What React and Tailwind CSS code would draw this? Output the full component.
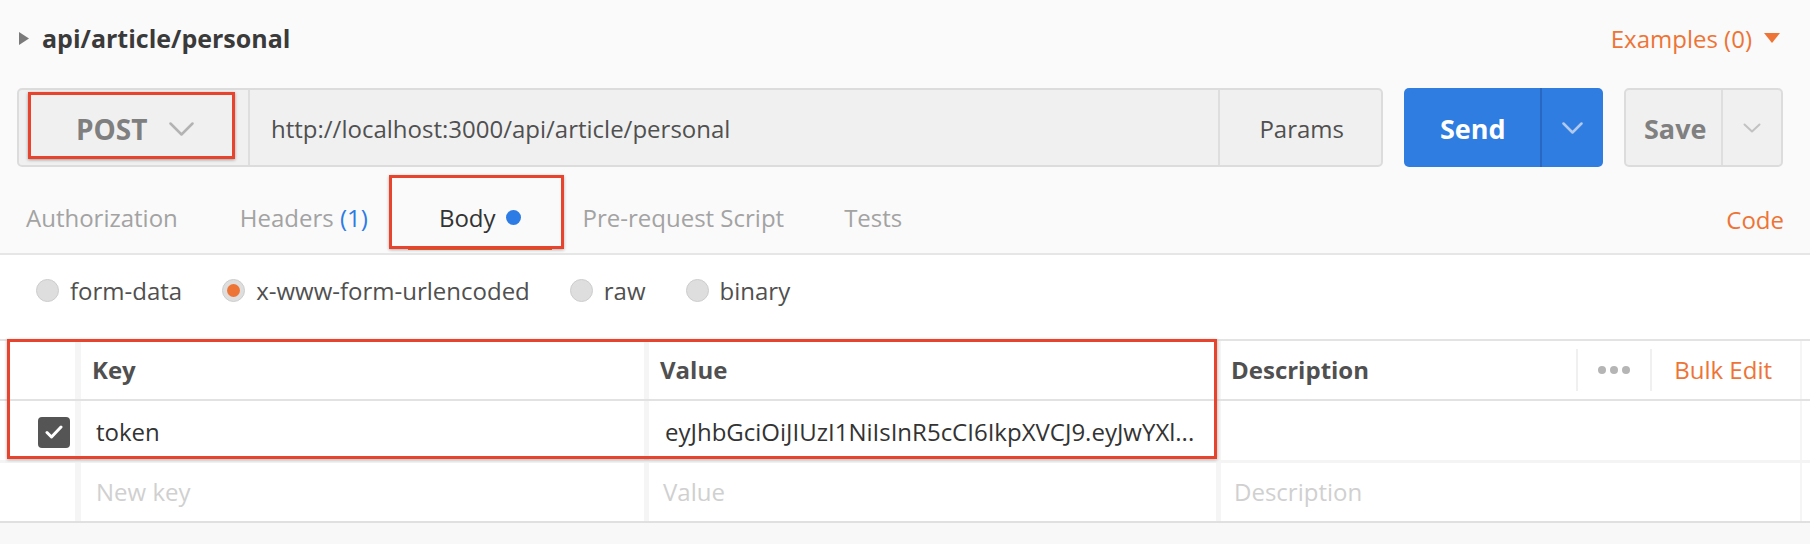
import React from "react";

function Chevron({ w, h, color, sw = 2.5 }) {
  return (
    <svg width={w} height={h} viewBox={`0 0 ${w} ${h}`} fill="none">
      <polyline
        points={`1.5,1.5 ${w / 2},${h - 1.5} ${w - 1.5},1.5`}
        stroke={color}
        strokeWidth={sw}
        strokeLinecap="round"
        strokeLinejoin="round"
      />
    </svg>
  );
}

function Radio({ label, checked }) {
  return (
    <div className="flex items-center gap-[11px]">
      <div className="w-[23px] h-[23px] rounded-full bg-[#dedede] border border-[#cdcdcd] flex items-center justify-center">
        {checked && <div className="w-[13px] h-[13px] rounded-full bg-[#ee7436]" />}
      </div>
      <span className="text-[24px] leading-[33px] text-[#505050]">{label}</span>
    </div>
  );
}

function Tab({ children, active, className = "" }) {
  return (
    <div
      className={
        "relative px-[31px] pb-[13px] border-b-[3px] leading-[33px] text-[24px] " +
        (active ? "border-[#ee7436] text-[#333333] " : "border-transparent text-[#a3a3a3] ") +
        className
      }
    >
      {children}
    </div>
  );
}

export default function App() {
  return (
    <div className="w-[1810px] h-[544px] bg-[#fafafa] overflow-hidden font-['Open_Sans',sans-serif] flex flex-col">
      {/* title row */}
      <div className="mt-[20px] h-[36px] flex items-center justify-between pl-[19px] pr-[30px]">
        <div className="flex items-center gap-[13px]">
          <svg width="10" height="13" viewBox="0 0 10 13">
            <polygon points="0,0 10,6.5 0,13" fill="#7a7a7a" />
          </svg>
          <span className="text-[25px] font-bold text-[#3a3a3a] leading-[36px]">api/article/personal</span>
        </div>
        <div className="flex items-center gap-[12px] text-[#ee7436]">
          <span className="text-[24px] leading-[33px]">Examples (0)</span>
          <svg width="16" height="10" viewBox="0 0 16 10">
            <polygon points="0,0 16,0 8,10" fill="#ee7436" />
          </svg>
        </div>
      </div>

      {/* url row */}
      <div className="mt-[32px] h-[79px] flex pl-[17px] gap-[21px]">
        <div className="w-[1366px] flex border-2 border-[#dcdcdc] rounded-[5px] bg-[#f0f0f0]">
          <div className="relative w-[231px] border-r-2 border-[#dedede] flex items-center pl-[57px]">
            <span className="text-[28px] font-bold text-[#7f7f7f] mt-[3px]">POST</span>
            <span className="ml-[21px] mt-[2px]">
              <Chevron w={25} h={14} color="#b3b3b3" />
            </span>
            <div className="absolute left-[9px] right-[13px] top-[2px] bottom-[6px] border-[3px] border-[#e8432d] shadow-[0_1px_3px_rgba(0,0,0,0.35)]" />
          </div>
          <div className="flex-1 flex items-center pl-[21px] pt-[2px] text-[24px] text-[#505050]">
            http://localhost:3000/api/article/personal
          </div>
          <div className="border-l-2 border-[#dedede] flex items-center pl-[39px] pr-[37px] pt-[2px] text-[24px] text-[#505050]">
            Params
          </div>
        </div>
        <div className="w-[199px] flex rounded-[5px] bg-[#2f7de1]">
          <div className="w-[138px] border-r-2 border-[#2867c2] flex items-center pl-[36px]">
            <span className="text-[27px] font-bold text-white mt-[3px]">Send</span>
          </div>
          <div className="flex-1 flex items-center justify-center">
            <Chevron w={21} h={12} color="#b1c9ec" />
          </div>
        </div>
        <div className="w-[159px] flex border-2 border-[#dcdcdc] rounded-[5px] bg-[#f0f0f0]">
          <div className="w-[97px] border-r-2 border-[#dedede] flex items-center pl-[18px]">
            <span className="text-[27px] font-bold text-[#808080] mt-[3px]">Save</span>
          </div>
          <div className="flex-1 flex items-center justify-center">
            <Chevron w={18} h={10} color="#c2c2c2" sw={2} />
          </div>
        </div>
      </div>

      {/* tabs */}
      <div className="h-[88px] border-b-2 border-[#e6e6e6] flex items-end justify-between pb-[3px]">
        <div className="flex items-end ml-[-5px]">
          <Tab>Authorization</Tab>
          <Tab>
            Headers <span className="text-[#2d7be5]">(1)</span>
          </Tab>
          <Tab active className="ml-[9px] flex items-center">
            <span>Body</span>
            <span className="ml-[10px] w-[15px] h-[15px] rounded-full bg-[#2d7be5]" />
            <div className="absolute -left-[19px] -right-[12px] -top-[26px] -bottom-[2px] border-[3px] border-[#e8432d] shadow-[0_1px_3px_rgba(0,0,0,0.3)]" />
          </Tab>
          <Tab>Pre-request Script</Tab>
          <Tab className="-ml-[2px]">Tests</Tab>
        </div>
        <div className="pr-[26px] mb-[14px] text-[24px] leading-[33px] text-[#ee7436]">Code</div>
      </div>

      {/* body type radios */}
      <div className="h-[84px] bg-white flex items-start pt-[19px] pl-[36px] gap-[40px]">
        <Radio label="form-data" />
        <Radio label="x-www-form-urlencoded" checked />
        <Radio label="raw" />
        <Radio label="binary" />
      </div>

      {/* key/value table */}
      <div className="relative bg-white border-t-2 border-[#e3e3e3]">
        <div className="flex h-[60px] border-b-2 border-[#e2e2e2] text-[24px] font-bold text-[#505050]">
          <div className="w-[75px]" />
          <div className="w-[569px] border-l-[6px] border-[#f5f5f5] flex items-center pl-[11px]">Key</div>
          <div className="w-[572px] border-l-[5px] border-[#f5f5f5] flex items-center pl-[11px]">Value</div>
          <div className="w-[586px] border-l-[5px] border-r-2 border-[#f5f5f5] flex items-center pl-[10px]">
            <span className="flex-1">Description</span>
            <div className="w-[2px] h-[42px] bg-[#f0f0f0]" />
            <div className="flex gap-[4px] px-[20px]">
              <span className="w-[8px] h-[8px] rounded-full bg-[#b5b5b5]" />
              <span className="w-[8px] h-[8px] rounded-full bg-[#b5b5b5]" />
              <span className="w-[8px] h-[8px] rounded-full bg-[#b5b5b5]" />
            </div>
            <div className="w-[2px] h-[42px] bg-[#f0f0f0]" />
            <span className="pl-[22px] pr-[28px] font-normal text-[#ee7436]">Bulk Edit</span>
          </div>
        </div>

        <div className="flex h-[62px] border-b-[3px] border-[#f4f4f4] text-[24px] text-[#333333]">
          <div className="w-[75px] flex items-center pl-[38px] pt-[3px]">
            <div className="w-[32px] h-[31px] rounded-[4px] bg-[#555555] flex items-center justify-center">
              <svg width="18" height="14" viewBox="0 0 18 14" fill="none">
                <polyline points="2,7.5 6.5,12 16,2" stroke="white" strokeWidth="3" strokeLinecap="round" strokeLinejoin="round" />
              </svg>
            </div>
          </div>
          <div className="w-[569px] border-l-[6px] border-[#f5f5f5] flex items-center pl-[15px] pt-[3px]">token</div>
          <div className="w-[572px] border-l-[5px] border-[#f5f5f5] flex items-center pl-[16px] pt-[3px] whitespace-nowrap overflow-hidden">
            eyJhbGciOiJIUzI1NiIsInR5cCI6IkpXVCJ9.eyJwYXl...
          </div>
          <div className="w-[586px] border-l-[5px] border-r-2 border-[#f5f5f5]" />
        </div>

        <div className="flex h-[60px] border-b-2 border-[#e0e0e0] text-[24px] text-[#d0d0d0]">
          <div className="w-[75px]" />
          <div className="w-[569px] border-l-[6px] border-[#f5f5f5] flex items-center pl-[15px]">New key</div>
          <div className="w-[572px] border-l-[5px] border-[#f5f5f5] flex items-center pl-[14px]">Value</div>
          <div className="w-[586px] border-l-[5px] border-r-2 border-[#f5f5f5] flex items-center pl-[13px]">Description</div>
        </div>

        <div className="absolute left-[7px] top-[-2px] w-[1210px] h-[120px] border-[3px] border-[#e8432d] shadow-[0_1px_3px_rgba(0,0,0,0.3)]" />
      </div>

      <div className="flex-1 bg-[#f8f8f8]" />
    </div>
  );
}
